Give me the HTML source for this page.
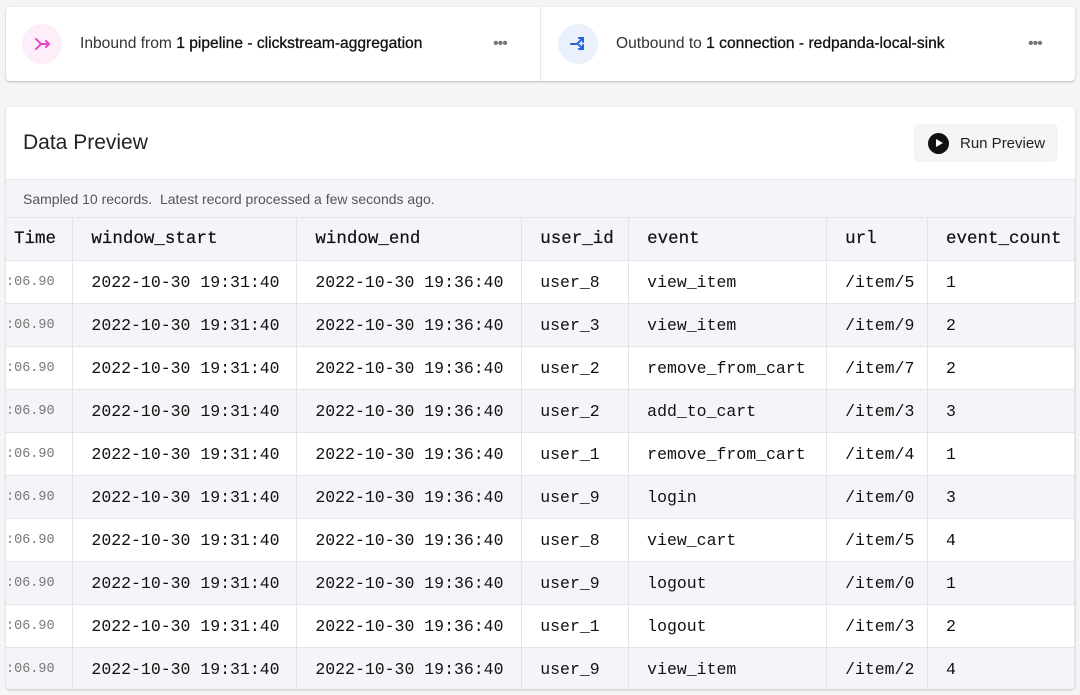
<!DOCTYPE html>
<html><head><style>
*{box-sizing:border-box;margin:0;padding:0}
body{width:1080px;height:695px;background:#f4f5f7;font-family:"Liberation Sans",sans-serif;position:relative;overflow:hidden;color:#1f2328}
.card{position:absolute;left:6px;top:7px;width:1069px;height:74px;background:#fff;border-radius:4px;box-shadow:0 1px 2px rgba(0,0,0,.25)}
.half{position:absolute;top:0;height:74px;display:flex;align-items:center}
.ic{width:40px;height:40px;border-radius:50%;display:flex;align-items:center;justify-content:center}
.lbl{font-size:15.6px;color:#333;margin-left:18px}
.lbl b{font-weight:normal;color:#111;-webkit-text-stroke:0.3px #111}
.dots{position:absolute;font-size:16px;color:#777;letter-spacing:-1px;top:28px}
.panel{position:absolute;left:6px;top:107px;width:1069px;height:582px;background:#fff;border-radius:4px;box-shadow:0 1px 2px rgba(0,0,0,.2);overflow:hidden}
.title{position:absolute;left:17px;top:24px;font-size:21px;color:#222}
.btn{position:absolute;left:908px;top:17px;width:144px;height:38px;background:#f4f5f7;border-radius:5px;display:flex;align-items:center;padding-left:14px;font-size:15px;color:#222}
.btn .pl{width:21px;height:21px;border-radius:50%;background:#111;margin-right:11px;position:relative}
.btn .pl:after{content:"";position:absolute;left:8px;top:6px;border-left:7px solid #fff;border-top:4.5px solid transparent;border-bottom:4.5px solid transparent}
.sub{position:absolute;left:0;top:72px;width:100%;height:38px;background:#f3f5f8;border-top:1px solid #e5e7eb;font-size:14px;color:#555;padding:11px 0 0 17px}
table{position:absolute;left:0;top:110px;border-collapse:collapse;font-family:"Liberation Mono",monospace;font-size:16.5px;color:#111}
td,th{border:1px solid #e2e4e8;height:43px;text-align:left;padding-left:18px;font-weight:normal;white-space:nowrap}
th{background:#f3f5f8;font-weight:normal;font-size:17.5px;-webkit-text-stroke:0.2px #111}
tr:nth-child(odd) td{background:#f3f5f8}
td:first-child{font-size:13.5px;color:#777;padding-left:0}
th:first-child{padding-left:8px}
td:first-child,th:first-child{border-left:none}
</style></head><body>
<div class="card">
 <div class="half" style="left:16px">
  <div class="ic" style="background:#fdeefa"><svg width="20" height="20" viewBox="0 0 20 20" fill="none" stroke="#e849c8" stroke-width="2" stroke-linecap="round"><path d="M4 5l5 5-5 5M9 10h8M14 7l3 3-3 3"/></svg></div>
  <div class="lbl">Inbound from <b>1 pipeline - clickstream-aggregation</b></div>
 </div>
 <div class="dots" style="left:487px">•••</div>
 <div style="position:absolute;left:534px;top:0;width:1px;height:74px;background:#e5e7eb"></div>
 <div class="half" style="left:552px">
  <div class="ic" style="background:#eaf0fc"><svg width="20" height="20" viewBox="0 0 20 20" fill="none" stroke="#2563d9" stroke-width="2" stroke-linecap="round"><path d="M3 10h6l6-6M11 4h4v4M11 11l4 4M15 11v4h-4"/></svg></div>
  <div class="lbl">Outbound to <b>1 connection - redpanda-local-sink</b></div>
 </div>
 <div class="dots" style="left:1022px">•••</div>
</div>
<div class="panel">
 <div class="title">Data Preview</div>
 <div class="btn"><span class="pl"></span>Run Preview</div>
 <div class="sub">Sampled 10 records.&nbsp; Latest record processed a few seconds ago.</div>
 <table>
  <colgroup><col style="width:67px"><col style="width:224px"><col style="width:225px"><col style="width:107px"><col style="width:198px"><col style="width:101px"><col style="width:147px"></colgroup>
  <tr><th>Time</th><th>window_start</th><th>window_end</th><th>user_id</th><th>event</th><th>url</th><th>event_count</th></tr>
  <tr><td>:06.90</td><td>2022-10-30 19:31:40</td><td>2022-10-30 19:36:40</td><td>user_8</td><td>view_item</td><td>/item/5</td><td>1</td></tr>
  <tr><td>:06.90</td><td>2022-10-30 19:31:40</td><td>2022-10-30 19:36:40</td><td>user_3</td><td>view_item</td><td>/item/9</td><td>2</td></tr>
  <tr><td>:06.90</td><td>2022-10-30 19:31:40</td><td>2022-10-30 19:36:40</td><td>user_2</td><td>remove_from_cart</td><td>/item/7</td><td>2</td></tr>
  <tr><td>:06.90</td><td>2022-10-30 19:31:40</td><td>2022-10-30 19:36:40</td><td>user_2</td><td>add_to_cart</td><td>/item/3</td><td>3</td></tr>
  <tr><td>:06.90</td><td>2022-10-30 19:31:40</td><td>2022-10-30 19:36:40</td><td>user_1</td><td>remove_from_cart</td><td>/item/4</td><td>1</td></tr>
  <tr><td>:06.90</td><td>2022-10-30 19:31:40</td><td>2022-10-30 19:36:40</td><td>user_9</td><td>login</td><td>/item/0</td><td>3</td></tr>
  <tr><td>:06.90</td><td>2022-10-30 19:31:40</td><td>2022-10-30 19:36:40</td><td>user_8</td><td>view_cart</td><td>/item/5</td><td>4</td></tr>
  <tr><td>:06.90</td><td>2022-10-30 19:31:40</td><td>2022-10-30 19:36:40</td><td>user_9</td><td>logout</td><td>/item/0</td><td>1</td></tr>
  <tr><td>:06.90</td><td>2022-10-30 19:31:40</td><td>2022-10-30 19:36:40</td><td>user_1</td><td>logout</td><td>/item/3</td><td>2</td></tr>
  <tr><td>:06.90</td><td>2022-10-30 19:31:40</td><td>2022-10-30 19:36:40</td><td>user_9</td><td>view_item</td><td>/item/2</td><td>4</td></tr>
 </table>
</div>
</body></html>
